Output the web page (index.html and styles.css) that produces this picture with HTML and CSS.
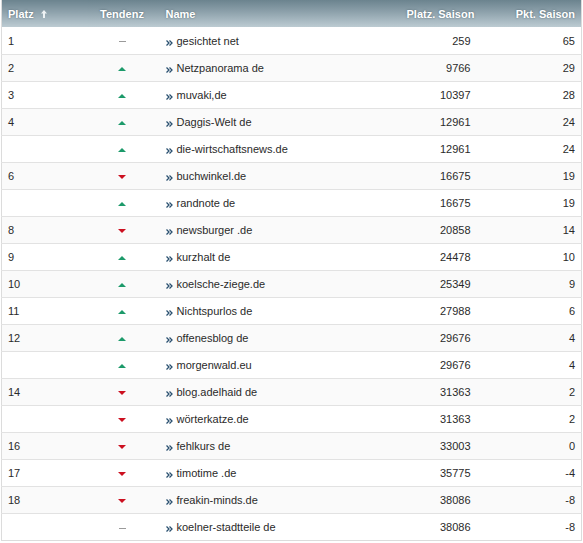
FILE: index.html
```html
<!DOCTYPE html>
<html>
<head>
<meta charset="utf-8">
<link rel="stylesheet" href="styles.css">
</head>
<body>
<table class="rank">
<colgroup>
<col class="c-platz"><col class="c-tend"><col class="c-name"><col class="c-ps"><col class="c-pkt">
</colgroup>
<thead>
<tr>
<th class="platz">Platz <svg class="sort" width="6" height="8" viewBox="0 0 6 8"><path d="M3 0 L6 3.5 L4 3.5 L4 8 L2 8 L2 3.5 L0 3.5 Z" fill="#eef2f4"/></svg></th>
<th class="tend">Tendenz</th>
<th class="name">Name</th>
<th class="num">Platz. Saison</th>
<th class="num last">Pkt. Saison</th>
</tr>
</thead>
<tbody>
<tr><td>1</td><td class="tend"><span class="same"></span></td><td class="name"><span class="chev"></span>gesichtet net</td><td class="num">259</td><td class="num last">65</td></tr>
<tr><td>2</td><td class="tend"><span class="up"></span></td><td class="name"><span class="chev"></span>Netzpanorama de</td><td class="num">9766</td><td class="num last">29</td></tr>
<tr><td>3</td><td class="tend"><span class="up"></span></td><td class="name"><span class="chev"></span>muvaki,de</td><td class="num">10397</td><td class="num last">28</td></tr>
<tr><td>4</td><td class="tend"><span class="up"></span></td><td class="name"><span class="chev"></span>Daggis-Welt de</td><td class="num">12961</td><td class="num last">24</td></tr>
<tr><td></td><td class="tend"><span class="up"></span></td><td class="name"><span class="chev"></span>die-wirtschaftsnews.de</td><td class="num">12961</td><td class="num last">24</td></tr>
<tr><td>6</td><td class="tend"><span class="down"></span></td><td class="name"><span class="chev"></span>buchwinkel.de</td><td class="num">16675</td><td class="num last">19</td></tr>
<tr><td></td><td class="tend"><span class="up"></span></td><td class="name"><span class="chev"></span>randnote de</td><td class="num">16675</td><td class="num last">19</td></tr>
<tr><td>8</td><td class="tend"><span class="down"></span></td><td class="name"><span class="chev"></span>newsburger .de</td><td class="num">20858</td><td class="num last">14</td></tr>
<tr><td>9</td><td class="tend"><span class="up"></span></td><td class="name"><span class="chev"></span>kurzhalt de</td><td class="num">24478</td><td class="num last">10</td></tr>
<tr><td>10</td><td class="tend"><span class="up"></span></td><td class="name"><span class="chev"></span>koelsche-ziege.de</td><td class="num">25349</td><td class="num last">9</td></tr>
<tr><td>11</td><td class="tend"><span class="up"></span></td><td class="name"><span class="chev"></span>Nichtspurlos de</td><td class="num">27988</td><td class="num last">6</td></tr>
<tr><td>12</td><td class="tend"><span class="up"></span></td><td class="name"><span class="chev"></span>offenesblog de</td><td class="num">29676</td><td class="num last">4</td></tr>
<tr><td></td><td class="tend"><span class="up"></span></td><td class="name"><span class="chev"></span>morgenwald.eu</td><td class="num">29676</td><td class="num last">4</td></tr>
<tr><td>14</td><td class="tend"><span class="down"></span></td><td class="name"><span class="chev"></span>blog.adelhaid de</td><td class="num">31363</td><td class="num last">2</td></tr>
<tr><td></td><td class="tend"><span class="down"></span></td><td class="name"><span class="chev"></span>wörterkatze.de</td><td class="num">31363</td><td class="num last">2</td></tr>
<tr><td>16</td><td class="tend"><span class="down"></span></td><td class="name"><span class="chev"></span>fehlkurs de</td><td class="num">33003</td><td class="num last">0</td></tr>
<tr><td>17</td><td class="tend"><span class="down"></span></td><td class="name"><span class="chev"></span>timotime .de</td><td class="num">35775</td><td class="num last">-4</td></tr>
<tr><td>18</td><td class="tend"><span class="down"></span></td><td class="name"><span class="chev"></span>freakin-minds.de</td><td class="num">38086</td><td class="num last">-8</td></tr>
<tr><td></td><td class="tend"><span class="same"></span></td><td class="name"><span class="chev"></span>koelner-stadtteile de</td><td class="num">38086</td><td class="num last">-8</td></tr>
</tbody>
</table>
</body>
</html>
```

FILE: styles.css
```css
html, body {
  margin: 0;
  padding: 0;
  background: #fff;
}
body {
  padding: 0 1px;
  font-family: "Liberation Sans", Arial, sans-serif;
  font-size: 11px;
  color: #222;
}
.rank {
  width: 580px;
  border-collapse: collapse;
  table-layout: fixed;
  border: 1px solid #dcdcdc;
  border-top: none;
}
.c-platz { width: 85px; }
.c-tend { width: 71px; }
.c-name { width: 243px; }
.c-ps { width: 79px; }
.c-pkt { width: 102px; }

.rank thead th {
  height: 27px;
  padding: 0 6px;
  background: linear-gradient(to bottom, #6b838e 0%, #8ea2ac 45%, #bccbd2 100%);
  color: #fff;
  font-weight: bold;
  font-size: 11px;
  text-align: left;
  text-shadow: 0 0 2px rgba(40,60,70,0.6);
  white-space: nowrap;
}
.rank thead th.platz { padding-left: 6px; }
.rank thead th.tend { text-align: center; padding: 0; }
.rank thead th.name { padding-left: 8px; }
.rank th.num, .rank td.num { text-align: right; padding-right: 9px; }
.rank th.last, .rank td.last { padding-right: 6px; }
.sort { margin-left: 4px; vertical-align: 0px; }

.rank tbody td {
  height: 26px;
  padding: 0 6px;
  border-top: 1px solid #e2e2e2;
  white-space: nowrap;
  vertical-align: middle;
  color: #2a2a2a;
}
.rank tbody tr:first-child td { border-top: none; height: 27px; }
.rank tbody tr:nth-child(even) td { background: #fafafa; }
.rank td.tend { text-align: center; padding: 0; }
.rank td.name { padding-left: 8px; }

.up, .down, .same {
  display: inline-block;
  vertical-align: middle;
}
.up {
  width: 0; height: 0;
  border-left: 4px solid transparent;
  border-right: 4px solid transparent;
  border-bottom: 4px solid #1c9a6a;
}
.down {
  width: 0; height: 0;
  border-left: 4px solid transparent;
  border-right: 4px solid transparent;
  border-top: 4px solid #cc1020;
}
.same {
  width: 7px;
  height: 1px;
  background: #9a9a9a;
}
.chev {
  display: inline-block;
  width: 7px;
  height: 6px;
  margin-right: 4px;
  vertical-align: -1px;
  background:
    url("data:image/svg+xml;utf8,<svg xmlns='http://www.w3.org/2000/svg' width='7' height='6' viewBox='0 0 7 6'><path d='M0.5 0.5 L3 3 L0.5 5.5 M3.5 0.5 L6 3 L3.5 5.5' fill='none' stroke='%232a5070' stroke-width='1.3'/></svg>") no-repeat;
}
```
